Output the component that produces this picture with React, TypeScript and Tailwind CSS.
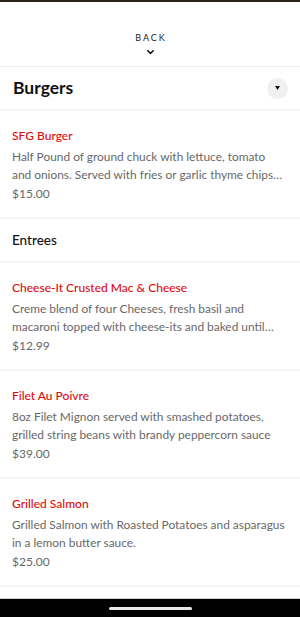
import React from "react";

type Item = {
  name: string;
  description: string;
  price: string;
};

const burgers: Item[] = [
  {
    name: "SFG Burger",
    description:
      "Half Pound of ground chuck with lettuce, tomato and onions. Served with fries or garlic thyme chips and a pickle spear.",
    price: "$15.00",
  },
];

const entrees: Item[] = [
  {
    name: "Cheese-It Crusted Mac & Cheese",
    description:
      "Creme blend of four Cheeses, fresh basil and macaroni topped with cheese-its and baked until golden brown.",
    price: "$12.99",
  },
  {
    name: "Filet Au Poivre",
    description:
      "8oz Filet Mignon served with smashed potatoes, grilled string beans with brandy peppercorn sauce",
    price: "$39.00",
  },
  {
    name: "Grilled Salmon",
    description:
      "Grilled Salmon with Roasted Potatoes and asparagus in a lemon butter sauce.",
    price: "$25.00",
  },
];

function MenuItem({ item }: { item: Item }) {
  return (
    <div className="pl-3 pr-[13px] pt-[17px] pb-[15px] border-b-2 border-[#f5f5f5]">
      <p className="text-[12px] leading-[16px] text-[#e00c0c] font-medium">{item.name}</p>
      <p className="mt-[4px] text-[11.9px] leading-[17.5px] text-[#686868] line-clamp-2">
        {item.description}
      </p>
      <p className="mt-[3px] text-[12px] leading-[16px] text-[#686868]">{item.price}</p>
    </div>
  );
}

export default function App() {
  return (
    <div
      className="w-[300px] h-[617px] bg-white flex flex-col overflow-hidden"
      style={{ fontFamily: "Lato, 'Noto Sans', sans-serif" }}
    >
      <div className="h-[2px] bg-[#2b2416]" />
      <div className="flex-1 overflow-hidden">
        <div className="h-[65px] flex flex-col items-center pt-[31px] border-b border-[#eeeeee]">
          <span className="text-[9px] leading-[10px] tracking-[2px] pl-[2px] text-[#222]">BACK</span>
          <svg width="9" height="6" viewBox="0 0 9 6" className="mt-[6px]">
            <path d="M1.3 1.3 L4.5 4.4 L7.7 1.3" stroke="#111" strokeWidth="1.5" fill="none" />
          </svg>
        </div>
        <div className="h-[44px] flex items-center justify-between pl-[13px] pr-[12px] border-b-2 border-[#f5f5f5]">
          <h1 className="text-[17.5px] font-bold text-[#111]">Burgers</h1>
          <button className="w-[21px] h-[21px] rounded-full bg-[#f0f0f0] flex items-center justify-center">
            <svg width="5" height="4" viewBox="0 0 5 4">
              <path d="M0 0 L5 0 L2.5 4 Z" fill="#111" />
            </svg>
          </button>
        </div>
        {burgers.map((item) => (
          <MenuItem key={item.name} item={item} />
        ))}
        <div className="h-[44px] flex items-center px-3 border-b-2 border-[#f5f5f5]">
          <h2 className="text-[13.5px] font-medium text-[#111]">Entrees</h2>
        </div>
        {entrees.map((item) => (
          <MenuItem key={item.name} item={item} />
        ))}
      </div>
      <div className="h-[19px] bg-black flex items-center justify-center border-t border-[#cfcfcf]">
        <div className="w-[83px] h-[3px] rounded-full bg-[#e8e8e8]" />
      </div>
    </div>
  );
}
